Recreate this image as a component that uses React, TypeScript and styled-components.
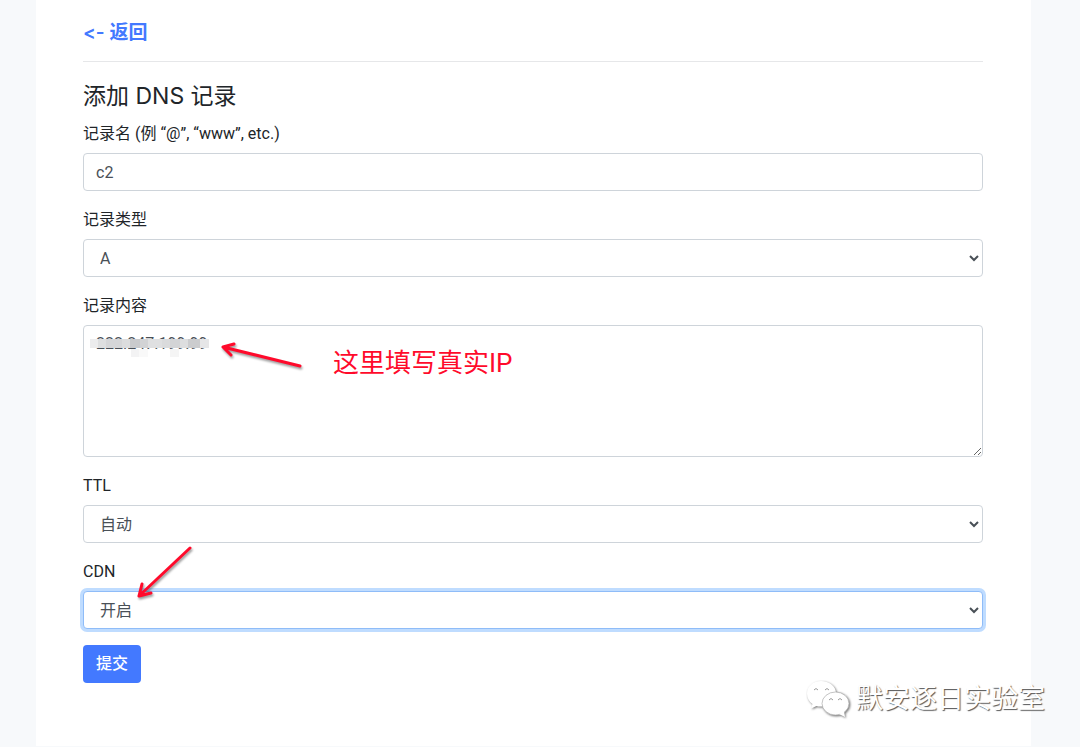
import React from "react";
import styled, { createGlobalStyle, css } from "styled-components";

const GlobalStyle = createGlobalStyle`
  *, *::before, *::after { box-sizing: border-box; }
  body {
    margin: 0;
    background: #f7f9fb;
    color: #212529;
    font-family: Roboto, "Noto Sans CJK SC", sans-serif;
    font-size: 16px;
    line-height: 24px;
  }
`;

const Page = styled.div`
  position: relative;
  padding: 0 49px 0 36px;
`;

const Panel = styled.main`
  background: #fff;
  padding: 20px 48px 63px 47px;
`;

const BackLink = styled.a`
  display: block;
  width: max-content;
  color: #4379ff;
  font-family: Inter, "Noto Sans CJK SC", sans-serif;
  font-size: 19px;
  font-weight: 600;
  font-feature-settings: "calt" 0;
  line-height: 26px;
  text-decoration: none;
`;

const Divider = styled.hr`
  border: 0;
  border-top: 1px solid #e6e7e9;
  margin: 15px 0 20px;
`;

const Title = styled.h1`
  margin: 0 0 11px;
  font-family: Inter, "Noto Sans CJK SC", sans-serif;
  font-size: 23px;
  font-weight: 400;
  line-height: 28px;
`;

const Field = styled.div`
  position: relative;
  display: flex;
  flex-direction: column;
  gap: 6px;
  margin-bottom: 16px;
`;

const Label = styled.label`
  align-self: flex-start;
  line-height: 26px;
`;

const control = css`
  display: block;
  width: 100%;
  height: 38px;
  border: 1px solid #ced4da;
  border-radius: 4px;
  background: #fff;
  color: #495057;
  font: inherit;
  padding: 6px 12px;
  outline: 0;
`;

const TextInput = styled.input`
  ${control}
`;

const TextArea = styled.textarea`
  ${control}
  height: 132px;
  resize: vertical;
`;

const Select = styled.select<{ $active?: boolean }>`
  ${control}
  ${(p) =>
    p.$active &&
    css`
      border-color: #8fbcf8;
      box-shadow: 0 0 0 3px #bfdcff;
    `}
`;

const Submit = styled.button`
  display: block;
  height: 38px;
  padding: 0 13px;
  border: 0;
  border-radius: 4px;
  background: #4379ff;
  color: #fff;
  font: inherit;
  font-weight: 500;
`;

const Note = styled.span`
  position: absolute;
  left: 250px;
  top: 54px;
  color: #ff0a2b;
  font-size: 26px;
  line-height: 32px;
  white-space: nowrap;
  pointer-events: none;
`;

const Overlay = styled.svg<{ $left: number; $top: number }>`
  position: absolute;
  left: ${(p) => p.$left}px;
  top: ${(p) => p.$top}px;
  pointer-events: none;
  overflow: visible;
`;

const ArrowLine = styled.path`
  fill: none;
  stroke: #ff0a2b;
  stroke-width: 3;
  stroke-linecap: round;
  stroke-linejoin: round;
  filter: drop-shadow(1px 2px 1px rgba(0, 0, 0, 0.4));
`;

const Watermark = styled.div`
  position: absolute;
  right: 35px;
  bottom: 27px;
  display: flex;
  align-items: center;
  gap: 6px;
  color: #fff;
  font-size: 27px;
  line-height: 40px;
  text-shadow: 1px 1px 1px #555;
`;

const ChatLogo = styled.svg`
  overflow: visible;
  filter: drop-shadow(1px 1px 1px rgba(0, 0, 0, 0.55));
`;

const mosaic: [number, number, number, string][] = [
  [0, 0, 8, "#ececed"],
  [8, 0, 8, "#dedfe0"],
  [16, 0, 16, "#d5d6d8"],
  [32, 0, 8, "#dcddde"],
  [40, 0, 10, "#c9cacc"],
  [50, 0, 8, "#d2d3d5"],
  [58, 0, 14, "#dfe0e1"],
  [72, 0, 8, "#dadbdc"],
  [80, 0, 10, "#d3d4d6"],
  [90, 0, 8, "#dddedf"],
  [98, 0, 12, "#cbccce"],
  [110, 0, 9, "#e6e6e7"],
  [41, 10, 8, "#f3f3f4"],
  [49, 10, 9, "#f9f9f9"],
  [80, 10, 9, "#f5f5f5"],
];

export default function App() {
  return (
    <>
      <GlobalStyle />
      <Page>
        <Panel>
          <BackLink href="#">&lt;- 返回</BackLink>
          <Divider />
          <Title>添加 DNS 记录</Title>
          <form onSubmit={(e) => e.preventDefault()}>
            <Field>
              <Label htmlFor="name">记录名 (例 “@”, “www”, etc.)</Label>
              <TextInput id="name" defaultValue="c2" />
            </Field>
            <Field>
              <Label htmlFor="type">记录类型</Label>
              <Select id="type">
                <option>A</option>
              </Select>
            </Field>
            <Field>
              <Label htmlFor="content">记录内容</Label>
              <TextArea id="content" defaultValue="222.247.199.99" />
              <Overlay $left={7} $top={46} width="119" height="18" aria-hidden>
                {mosaic.map(([x, y, w, fill]) => (
                  <rect key={`${x}-${y}`} x={x} y={y} width={w} height={y ? 8 : 9} fill={fill} />
                ))}
              </Overlay>
              <Overlay $left={138} $top={48} width="82" height="28" aria-hidden>
                <ArrowLine d="M79 25L2 6M13 3L2 6L10 14" />
              </Overlay>
              <Note>这里填写真实IP</Note>
            </Field>
            <Field>
              <Label htmlFor="ttl">TTL</Label>
              <Select id="ttl">
                <option>自动</option>
              </Select>
            </Field>
            <Field>
              <Label htmlFor="cdn">CDN</Label>
              <Select id="cdn" $active>
                <option>开启</option>
              </Select>
              <Overlay $left={54} $top={-13} width="56" height="54" aria-hidden>
                <ArrowLine d="M53 2L2 50M5 38L2 50L14 47" />
              </Overlay>
            </Field>
            <Submit type="submit">提交</Submit>
          </form>
        </Panel>
        <Watermark>
          <ChatLogo width="44" height="38" viewBox="0 0 44 38" aria-hidden>
            <path
              d="M15 1C7 1 1 6.500 1 13.500C1 18 3 21.500 6.500 24L5 28.500L10.500 26C12 26.500 14 26.700 16 26.500L30 13C30 6 23 1 15 1Z"
              fill="#fff"
            />
            <path d="M8 10Q10 7 12 10M19 10Q21 7 23 10" fill="none" stroke="#999" />
            <ellipse cx="29.500" cy="23.500" rx="13.500" ry="11.500" fill="#fff" stroke="#aaa" strokeWidth=".7" />
            <path d="M33 34L39 37L38 31Z" fill="#fff" />
            <path d="M23 20Q25 17 27 20M32 20Q34 17 36 20" fill="none" stroke="#999" />
          </ChatLogo>
          <span>默安逐日实验室</span>
        </Watermark>
      </Page>
    </>
  );
}
